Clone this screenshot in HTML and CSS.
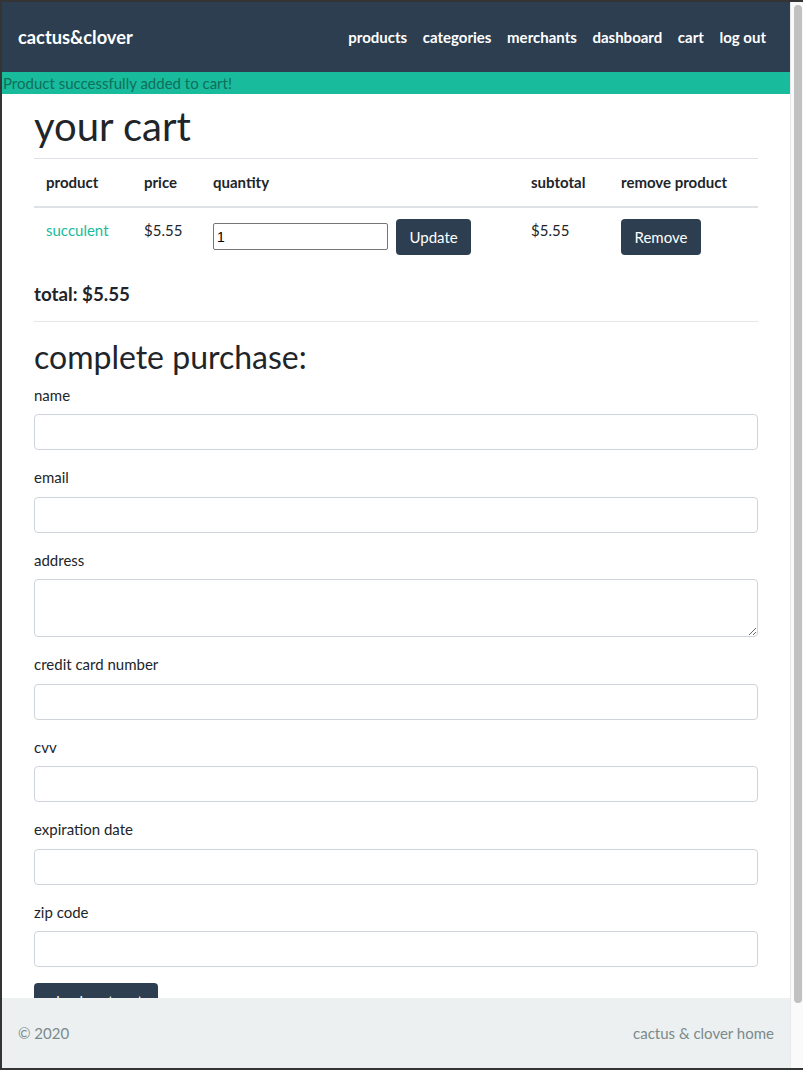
FILE: index.html
```html
<!DOCTYPE html>
<html lang="en">
<head>
<meta charset="utf-8">
<title>cactus&amp;clover - your cart</title>
<link rel="stylesheet" href="styles.css">
</head>
<body>
<div class="frame">
  <div class="viewport">
    <nav class="navbar">
      <a class="brand" href="#">cactus&amp;clover</a>
      <ul class="nav">
        <li><a href="#">products</a></li>
        <li><a href="#">categories</a></li>
        <li><a href="#">merchants</a></li>
        <li><a href="#">dashboard</a></li>
        <li><a href="#">cart</a></li>
        <li><a href="#">log out</a></li>
      </ul>
    </nav>
    <div class="flash">Product successfully added to cart!</div>
    <main class="main">
      <h1 class="title">your cart</h1>
      <table class="cart">
        <thead>
          <tr>
            <th class="c-product">product</th>
            <th class="c-price">price</th>
            <th class="c-qty">quantity</th>
            <th class="c-sub">subtotal</th>
            <th class="c-remove">remove product</th>
          </tr>
        </thead>
        <tbody>
          <tr>
            <td><a class="prod-link" href="#">succulent</a></td>
            <td>$5.55</td>
            <td>
              <form class="qty-form">
                <input class="qty-input" type="text" value="1">
                <button class="btn" type="button">Update</button>
              </form>
            </td>
            <td>$5.55</td>
            <td><button class="btn" type="button">Remove</button></td>
          </tr>
        </tbody>
      </table>
      <h5 class="total">total: $5.55</h5>
      <hr class="rule">
      <h2 class="subtitle">complete purchase:</h2>
      <form class="purchase">
        <div class="group">
          <label class="label">name</label>
          <input class="control" type="text">
        </div>
        <div class="group">
          <label class="label">email</label>
          <input class="control" type="text">
        </div>
        <div class="group">
          <label class="label">address</label>
          <textarea class="control area"></textarea>
        </div>
        <div class="group">
          <label class="label">credit card number</label>
          <input class="control" type="text">
        </div>
        <div class="group">
          <label class="label">cvv</label>
          <input class="control" type="text">
        </div>
        <div class="group">
          <label class="label">expiration date</label>
          <input class="control" type="text">
        </div>
        <div class="group">
          <label class="label">zip code</label>
          <input class="control" type="text">
        </div>
        <button class="btn btn-submit" type="button">check out cart</button>
      </form>
    </main>
    <footer class="footer">
      <span>&copy; 2020</span>
      <a class="footer-link" href="#">cactus &amp; clover home</a>
    </footer>
  </div>
  <div class="scrollbar"><div class="thumb"></div></div>
</div>
</body>
</html>
```
FILE: styles.css
```css
* { box-sizing: border-box; }
html, body { margin: 0; padding: 0; height: 100%; overflow: hidden; }
body {
  font-family: Lato, "Open Sans", "Liberation Sans", sans-serif;
  font-size: 15px;
  line-height: 1.5;
  color: #212529;
  background: #fff;
}
.frame {
  display: flex;
  height: 1070px;
  border-top: 2px solid #343434;
  border-left: 2px solid #343434;
  border-bottom: 2px solid #343434;
}
.viewport {
  flex: 1;
  display: flex;
  flex-direction: column;
  overflow: hidden;
  min-width: 0;
}
.navbar {
  display: flex;
  align-items: center;
  justify-content: space-between;
  height: 70px;
  padding: 0 16px;
  background: #2c3e50;
  flex: none;
}
.brand {
  color: #fff;
  text-decoration: none;
  font-size: 18.3px;
  font-weight: 700;
  line-height: 28px;
}
.nav {
  display: flex;
  list-style: none;
  margin: 0;
  padding: 0;
}
.nav a {
  display: block;
  padding: 8px 7.8px;
  color: #fff;
  text-decoration: none;
  font-weight: 700;
  font-size: 15px;
  line-height: 22px;
}
.nav li:last-child a { padding-right: 8px; }
.flash {
  flex: none;
  height: 22px;
  line-height: 22px;
  padding-left: 1px;
  background: #18bc9c;
  color: #106e5b;
  font-size: 15px;
}
.main {
  flex: 1;
  min-height: 0;
  overflow: hidden;
  padding: 8px 32px 0;
}
.title {
  font-size: 40px;
  font-weight: 400;
  line-height: 1.2;
  margin: 0 0 8px;
}
.cart {
  width: 100%;
  border-collapse: collapse;
  table-layout: fixed;
  margin-bottom: 16px;
}
.cart th, .cart td {
  text-align: left;
  vertical-align: top;
  padding: 12px;
}
.cart th {
  font-weight: 700;
  border-top: 1px solid #dee2e6;
  border-bottom: 2px solid #dee2e6;
}
.cart td { padding-top: 11px; }
.c-product { width: 98px; }
.c-price { width: 69px; }
.c-qty { width: 318px; }
.c-sub { width: 90px; }
.c-remove { width: auto; }
.prod-link { color: #18bc9c; text-decoration: none; }
.qty-form {
  display: flex;
  align-items: center;
  gap: 8px;
}
.qty-input {
  width: 175px;
  height: 27px;
  padding: 1px 3px;
  border: 1px solid #767676;
  border-radius: 2px;
  font-family: "Liberation Sans", Arial, sans-serif;
  font-size: 14px;
  color: #000;
  background: #fff;
}
.btn {
  display: inline-block;
  height: 36px;
  padding: 6px 13.5px;
  border: 0;
  border-radius: 4px;
  background: #2c3e50;
  color: #fff;
  font-family: Lato, "Open Sans", "Liberation Sans", sans-serif;
  font-size: 15px;
  line-height: 24px;
}
.btn-submit { padding: 6px 15px; }
.total {
  font-size: 18.75px;
  font-weight: 700;
  line-height: 1.2;
  margin: 0 0 8px;
}
.rule {
  border: 0;
  border-top: 1px solid #e6e6e6;
  margin: 16px 0;
}
.subtitle {
  font-size: 32px;
  font-weight: 400;
  line-height: 1.2;
  margin: 0 0 7.5px;
}
.group { margin-bottom: 16px; }
.label {
  display: block;
  margin-bottom: 8px;
  line-height: 22.5px;
}
.control {
  display: block;
  width: 100%;
  height: 36px;
  padding: 6px 12px;
  border: 1px solid #ced4da;
  border-radius: 4px;
  background: #fff;
  font-family: Lato, "Open Sans", "Liberation Sans", sans-serif;
  font-size: 15px;
  color: #495057;
}
.area { height: 58px; resize: vertical; }
.footer {
  flex: none;
  height: 70px;
  display: flex;
  align-items: center;
  justify-content: space-between;
  padding: 0 16px;
  background: #ecf0f1;
  color: #7b8a8b;
  font-size: 15px;
}
.footer-link { color: #7b8a8b; text-decoration: none; }
.scrollbar {
  flex: none;
  width: 13px;
  background: #fafafa;
  border-left: 1px solid #e8e8e8;
  padding: 3px 1px 0 3px;
}
.thumb {
  width: 8px;
  height: 998px;
  border-radius: 4px;
  background: #c1c1c1;
}
```
